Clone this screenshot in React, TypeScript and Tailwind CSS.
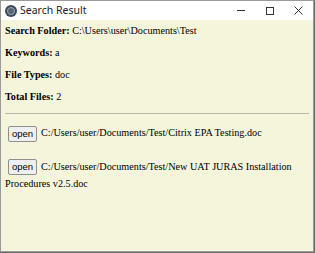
import React from "react";

export default function App() {
  const serif = { fontFamily: '"Liberation Serif", "Times New Roman", serif' };
  const btn =
    "inline-flex items-center justify-center ml-[3px] mr-[4px] w-[29px] h-[16px] text-[9.5px] leading-[14px] bg-[#efefef] border border-[#8f8f8f] rounded-[2px] text-black align-middle";
  const btnFont = { fontFamily: '"Liberation Sans", Arial, sans-serif' };
  return (
    <div className="w-[315px] h-[253px] bg-[#6b6b6b] overflow-hidden">
      <div className="w-[314px] h-[252px] flex flex-col border border-[#9a9a9a] bg-white">
        <div className="h-[19px] flex items-center bg-white shrink-0">
          <div className="ml-[4px] w-[12px] h-[12px] rounded-full bg-[#3a4a5a] flex items-center justify-center">
            <div className="w-[8px] h-[8px] rounded-full border border-[#9aa6b2] bg-[#566474]" />
          </div>
          <span className="ml-[3px] text-[10.5px] text-[#222]" style={{ fontFamily: '"Noto Sans", "Open Sans", sans-serif' }}>
            Search Result
          </span>
          <div className="ml-auto flex items-center h-full">
            <div className="w-[29px] flex justify-center">
              <div className="w-[8px] h-px bg-[#333]" />
            </div>
            <div className="w-[29px] flex justify-center">
              <div className="w-[8px] h-[8px] border border-[#333]" />
            </div>
            <div className="w-[29px] flex justify-center">
              <svg width="9" height="9" viewBox="0 0 9 9">
                <path d="M0.5 0.5 L8.5 8.5 M8.5 0.5 L0.5 8.5" stroke="#333" strokeWidth="1" />
              </svg>
            </div>
          </div>
        </div>
        <div className="flex-1 bg-[#f5f5dc] pl-[4px] pr-[4px] pt-[5px] text-[10.2px] text-black leading-[12px]" style={serif}>
          <p className="mb-[10px]"><b>Search Folder:</b> C:\Users\user\Documents\Test</p>
          <p className="mb-[10px]"><b>Keywords:</b> a</p>
          <p className="mb-[10px]"><b>File Types:</b> doc</p>
          <p className="mb-[10px]"><b>Total Files:</b> 2</p>
          <hr className="border-t border-[#b8b8b0] mb-[11px]" />
          <p className="mb-[16px] leading-[16px]">
            <button className={btn} style={btnFont}>open</button>
            C:/Users/user/Documents/Test/Citrix EPA Testing.doc
          </p>
          <p className="leading-[17px]">
            <button className={btn} style={btnFont}>open</button>
            C:/Users/user/Documents/Test/New UAT JURAS Installation Procedures v2.5.doc
          </p>
        </div>
      </div>
    </div>
  );
}
